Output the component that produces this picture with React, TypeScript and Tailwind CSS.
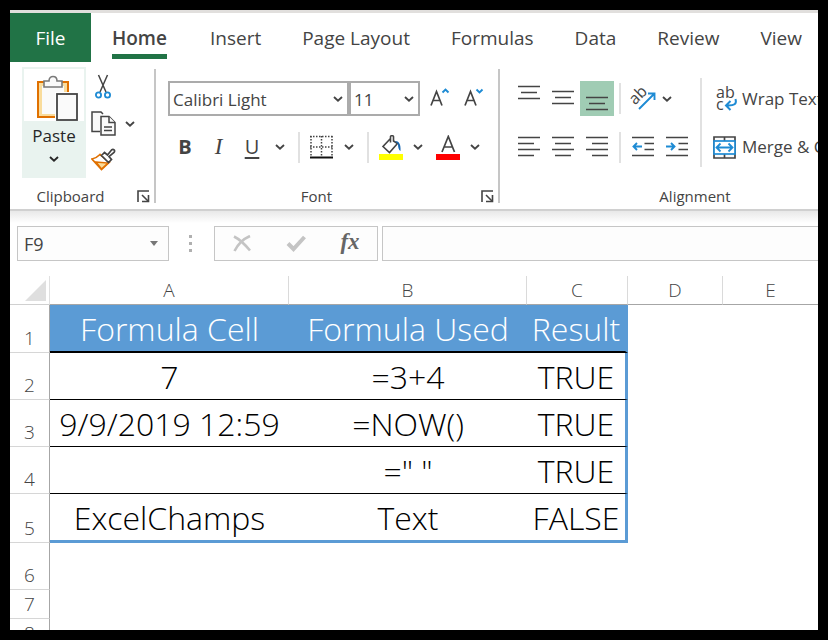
import { useState } from "react";
import type { ReactNode } from "react";

type Row = {
  n: number;
  cells: string[];
};

const TABS = ["Insert", "Page Layout", "Formulas", "Data", "Review", "View"];

const ROWS: Row[] = [
  { n: 2, cells: ["7", "=3+4", "TRUE"] },
  { n: 3, cells: ["9/9/2019 12:59", "=NOW()", "TRUE"] },
  { n: 4, cells: ["", '=" "', "TRUE"] },
];

type AlignKind = "top" | "middle" | "bottom";

function Chevron({ color = "#444444" }: { color?: string }) {
  return (
    <svg width="10" height="6" viewBox="0 0 10 6" fill="none" stroke={color} strokeWidth="1.9">
      <path d="M1 1l4 3.6L9 1" />
    </svg>
  );
}

function DropButton({ label, className = "" }: { label: string; className?: string }) {
  return (
    <button aria-label={label} className={`flex h-8 w-[14px] shrink-0 items-center justify-center ${className}`}>
      <Chevron />
    </button>
  );
}

function Launcher({ label }: { label: string }) {
  return (
    <button aria-label={label} className="shrink-0">
      <svg width="13" height="13" viewBox="0 0 13 13" fill="none" stroke="#444444" strokeWidth="1.6">
        <path d="M1 12V1h11" />
        <path d="M5 5l6 6" />
        <path d="M11.5 5v6.5H5" />
      </svg>
    </button>
  );
}

/** Small vertical rule between the tools of one group */
function Rule() {
  return <div className="h-[31px] w-[2px] shrink-0 bg-[#e1e1e1]" />;
}

function Tool({ label, className, children }: { label: string; className: string; children: ReactNode }) {
  return (
    <button aria-label={label} title={label} className={`flex shrink-0 items-center justify-center ${className}`}>
      {children}
    </button>
  );
}

function PasteIcon() {
  return (
    <svg width="42" height="46" viewBox="0 0 42 46" fill="none">
      <rect x="2" y="7" width="30" height="35" fill="#f9dc9c" stroke="#e07000" strokeWidth="2" />
      <rect x="6" y="11" width="22" height="28" fill="#fafafa" />
      <path d="M8 12V6h5c0-6 8-6 8 0h5v6z" fill="#fafafa" stroke="#7a7a7a" strokeWidth="1.6" />
      <rect x="19" y="17" width="23" height="29" fill="#ffffff" />
      <rect x="21" y="19" width="20" height="26" fill="#fafafa" stroke="#444444" strokeWidth="1.8" />
    </svg>
  );
}

function CutIcon() {
  return (
    <svg width="16" height="25" viewBox="0 0 16 25" fill="none">
      <path d="M3.5 1L11 18M12.5 1L5 18" stroke="#444444" strokeWidth="1.5" />
      <circle cx="3.5" cy="21" r="2.6" stroke="#1e8bd4" strokeWidth="1.8" />
      <circle cx="12.5" cy="21" r="2.6" stroke="#1e8bd4" strokeWidth="1.8" />
    </svg>
  );
}

function CopyIcon() {
  return (
    <svg width="25" height="25" viewBox="0 0 25 25" fill="#fafafa" stroke="#444444" strokeWidth="1.5">
      <path d="M9 20.5H1V1h9l2 2" />
      <path d="M10 5.5h8l6 6V24H10z" />
      <path d="M18 5.5v6h6M13 16h8M13 19.5h8" />
    </svg>
  );
}

function BrushIcon() {
  return (
    <svg width="25" height="23" viewBox="0 0 25 23" fill="none">
      <path d="M9 6.5C6.5 9 4 10.5 1 11L10.5 21.5 18.5 14z" fill="#ffffff" stroke="#e07000" strokeWidth="1.7" />
      <path d="M5 14l12 1-6.5 6z" fill="#f9dc9c" stroke="#e07000" strokeWidth="1.4" />
      <path
        d="M10.5 7.5l3-3 3 2.5 4-5c2-1.5 4 .5 2.5 2.5l-5 4 2.5 3-3 3z"
        fill="#ffffff"
        stroke="#444444"
        strokeWidth="1.7"
      />
    </svg>
  );
}

function BordersIcon() {
  return (
    <svg width="23" height="24" viewBox="0 0 23 24" fill="none">
      <path d="M0 1.5h23M0 12h23" stroke="#444444" strokeWidth="1.5" strokeDasharray="1.5 1.5" />
      <path d="M1 1v20M11.5 1v20M22 1v20" stroke="#444444" strokeWidth="1.5" strokeDasharray="1.5 1.5" />
      <path d="M0 22.5h23" stroke="#111111" strokeWidth="2" />
    </svg>
  );
}

function FillIcon() {
  return (
    <svg width="24" height="25" viewBox="0 0 24 25" fill="none">
      <path d="M11.5 3.5L4 11.5 10.5 17.5 18.5 8.5 14.5 6V1.5c0-1-3-1-3 0v6" stroke="#444444" strokeWidth="1.6" />
      <path d="M16 6c4 0 6 3 5.5 10-2-1-2.5-4-2.5-7z" fill="#1565b0" />
      <rect y="19" width="24" height="6" fill="#ffff00" />
    </svg>
  );
}

function FontColorIcon() {
  return (
    <svg width="24" height="25" viewBox="0 0 24 25" fill="none">
      <path d="M6 17L12.3 1.5 18.5 17M8 12h8.5" stroke="#444444" strokeWidth="1.7" />
      <rect y="19" width="24" height="6" fill="#ff0000" />
    </svg>
  );
}

function FontSizeIcon({ up }: { up: boolean }) {
  return (
    <svg width="20" height="21" viewBox="0 0 20 21" fill="none">
      <path d="M1 17.5L6.5 3.5 12 17.5M3 12.5h7" stroke="#444444" strokeWidth="1.7" />
      <path d={up ? "M12.5 4.5l3-3 3 3" : "M12.5 1.5l3 3 3-3"} stroke="#1e8bd4" strokeWidth="1.9" />
    </svg>
  );
}

function VAlignIcon({ kind }: { kind: AlignKind }) {
  const y = { top: 3.5, middle: 8.5, bottom: 14.5 }[kind];
  return (
    <svg width="22" height="31" viewBox="0 0 22 31" stroke="#444444" strokeWidth="1.5">
      <path d={`M0 ${y}h22M3 ${y + 6}h16M0 ${y + 12}h22`} />
    </svg>
  );
}

function HAlignIcon({ kind }: { kind: "left" | "center" | "right" }) {
  const x = { left: 0, center: 3, right: 6 }[kind];
  return (
    <svg width="22" height="22" viewBox="0 0 22 22" stroke="#444444" strokeWidth="1.5">
      <path d={`M0 1.5h22M${x} 7.5h16M0 13.5h22M${x} 19.5h16`} />
    </svg>
  );
}

function IndentIcon({ more }: { more: boolean }) {
  return (
    <svg width="22" height="22" viewBox="0 0 22 22" fill="none" strokeWidth="1.5">
      <path d="M0 1.5h22M12.5 7.5H22M12.5 13.5H22M0 19.5h22" stroke="#444444" />
      <path d={more ? "M0 10.5h8M5 7l3.5 3.5L5 14" : "M1 10.5h9M5 7l-3.5 3.5L5 14"} stroke="#1e8bd4" strokeWidth="1.9" />
    </svg>
  );
}

function OrientationIcon() {
  return (
    <svg width="26" height="26" viewBox="0 0 26 26" fill="none" className="overflow-visible">
      <text x="4" y="19" transform="rotate(-45 5 18)" fontSize="16" fill="#444444" className="font-['Open_Sans',sans-serif]">
        ab
      </text>
      <path d="M9 23L24 8M18 7.5h6.5V14" stroke="#1e8bd4" strokeWidth="1.9" />
    </svg>
  );
}

function WrapIcon() {
  return (
    <svg width="25" height="26" viewBox="0 0 25 26" fill="none" className="overflow-visible">
      <text fontSize="16" fill="#444444" className="font-['Open_Sans',sans-serif]">
        <tspan x="3" y="12">ab</tspan>
        <tspan x="3" y="24">c</tspan>
      </text>
      <path d="M22.5 13c1.5 5-1 7-9 6.5M17.5 15l-4.5 4.5 4.5 4.5" stroke="#1e8bd4" strokeWidth="2" />
    </svg>
  );
}

function MergeIcon() {
  return (
    <svg width="25" height="23" viewBox="0 0 25 23" fill="none">
      <path d="M1 1h21v21H1zM11.5 1v4M11.5 18v4" fill="#fafafa" stroke="#444444" strokeWidth="1.7" />
      <rect x="1" y="5" width="21" height="13" fill="#ffffff" stroke="#1e8bd4" strokeWidth="1.7" />
      <path d="M4 11.5h15M7.5 7.5l-4 4 4 4M15.5 7.5l4 4-4 4" stroke="#1e8bd4" strokeWidth="1.8" />
    </svg>
  );
}

function Picker({ label, options, className }: { label: string; options: string[]; className: string }) {
  return (
    <div className={`relative h-[35px] ${className}`}>
      <select
        aria-label={label}
        className="h-full w-full appearance-none border-2 border-[#ababab] bg-white pt-[2px] pl-[3px] text-[17px] text-[#444444]"
      >
        {options.map(o => (
          <option key={o}>{o}</option>
        ))}
      </select>
      <span className="pointer-events-none absolute inset-y-0 right-[6px] flex items-center">
        <Chevron />
      </span>
    </div>
  );
}

function RowHead({ n }: { n: number }) {
  return (
    <th
      scope="row"
      className="border-r border-b border-r-[#a6a6a6] border-b-[#d6d6d6] p-0 align-bottom text-[19px] leading-7 font-light text-[#444444]"
    >
      {n}
    </th>
  );
}

export default function App() {
  const [cellRef, setCellRef] = useState("F9");
  const [formula, setFormula] = useState("");

  return (
    <div className="h-screen bg-black p-[10px] font-['Open_Sans','Noto_Sans',sans-serif] text-[#444444]">
      <div className="flex h-full flex-col overflow-hidden bg-white">
        {/* Tabs */}
        <nav className="flex h-[52px] shrink-0 items-stretch border-t-[3px] border-[#e1dfdd] text-[19px] whitespace-nowrap">
          <button className="w-[81px] shrink-0 bg-[#217346] pt-[2px] text-white">File</button>
          <button className="ml-[21px] flex shrink-0 flex-col items-center font-semibold">
            <span className="pt-[10px] leading-[31px]">Home</span>
            <span className="h-[5px] w-full bg-[#217346]" />
          </button>
          <div className="flex items-center gap-[41px] pt-[2px] pl-[43px]">
            {TABS.map(t => (
              <button key={t}>{t}</button>
            ))}
          </div>
        </nav>

        {/* Ribbon */}
        <div className="flex h-[149px] shrink-0 items-start border-b-2 border-[#d0d0d0] pt-[5px]">
          <section aria-label="Clipboard" className="flex h-[137px] w-[144px] shrink-0 flex-col justify-between pl-3">
            <div className="flex">
              <button className="flex h-[111px] w-16 flex-col items-center bg-[#e9f3ef] p-[2px] text-[17px] text-[#262626]">
                <span className="flex h-[52px] w-full items-end justify-end bg-white pr-[6px]">
                  <PasteIcon />
                </span>
                <span className="leading-[30px]">Paste</span>
                <span className="pt-[5px]"><Chevron color="#262626" /></span>
              </button>
              <div className="flex flex-col gap-3 pt-[7px] pl-[5px]">
                <Tool label="Cut" className="w-6"><CutIcon /></Tool>
                <div className="flex h-[25px] items-center gap-[7px]">
                  <Tool label="Copy" className=""><CopyIcon /></Tool>
                  <DropButton label="Copy options" />
                </div>
                <Tool label="Format Painter" className="w-[25px]"><BrushIcon /></Tool>
              </div>
            </div>
            <div className="flex h-4 items-center pr-1">
              <span className="flex-1 pr-[18px] text-center text-[15px] leading-4">Clipboard</span>
              <Launcher label="Clipboard settings" />
            </div>
          </section>

          <div className="mt-[2px] h-[134px] w-[2px] shrink-0 bg-[#c6c6c6]" />

          <section aria-label="Font" className="flex h-[137px] w-[342px] shrink-0 flex-col pt-[14px]">
            <div className="flex items-center pl-3">
              <Picker label="Font" options={["Calibri Light", "Calibri", "Arial"]} className="w-[181px]" />
              <Picker label="Font size" options={["11", "12", "14"]} className="w-[71px]" />
              <Tool label="Increase Font Size" className="ml-[10px]"><FontSizeIcon up /></Tool>
              <Tool label="Decrease Font Size" className="ml-[14px]"><FontSizeIcon up={false} /></Tool>
            </div>
            <div className="mt-[15px] flex h-8 items-center pl-3">
              <Tool label="Bold" className="w-[34px] text-[20px] font-bold">B</Tool>
              <Tool label="Italic" className="w-[33px] font-['Liberation_Serif',serif] text-[23px] italic">I</Tool>
              <Tool label="Underline" className="w-[34px] text-[20px] underline underline-offset-[3px]">U</Tool>
              <DropButton label="Underline options" className="mx-1" />
              <div className="ml-[7px]"><Rule /></div>
              <Tool label="Borders" className="ml-[10px]"><BordersIcon /></Tool>
              <DropButton label="Border options" className="ml-[9px]" />
              <div className="ml-[11px]"><Rule /></div>
              <Tool label="Fill Color" className="ml-[10px]"><FillIcon /></Tool>
              <DropButton label="Fill options" className="mx-2" />
              <Tool label="Font Color" className="ml-[3px]"><FontColorIcon /></Tool>
              <DropButton label="Font color options" className="mx-2" />
            </div>
            <div className="mt-auto flex h-4 items-center pr-1">
              <span className="flex-1 pr-1 text-center text-[15px] leading-4">Font</span>
              <Launcher label="Font settings" />
            </div>
          </section>

          <div className="mt-[2px] h-[134px] w-[2px] shrink-0 bg-[#c6c6c6]" />

          <section aria-label="Alignment" className="flex h-[137px] shrink-0 flex-col pl-3">
            <div className="flex">
              <div className="flex flex-col gap-[15px] pt-[14px]">
                <div className="flex h-[35px] items-center">
                  <Tool label="Top Align" className="h-full w-[34px]"><VAlignIcon kind="top" /></Tool>
                  <Tool label="Middle Align" className="h-full w-[34px]"><VAlignIcon kind="middle" /></Tool>
                  <Tool label="Bottom Align" className="h-full w-[34px] bg-[#a0ccb4]"><VAlignIcon kind="bottom" /></Tool>
                  <div className="ml-[5px]"><Rule /></div>
                  <Tool label="Orientation" className="ml-[9px]"><OrientationIcon /></Tool>
                  <DropButton label="Orientation options" className="ml-1" />
                </div>
                <div className="flex h-8 items-center">
                  <Tool label="Align Left" className="w-[34px]"><HAlignIcon kind="left" /></Tool>
                  <Tool label="Center" className="w-[34px]"><HAlignIcon kind="center" /></Tool>
                  <Tool label="Align Right" className="w-[34px]"><HAlignIcon kind="right" /></Tool>
                  <div className="ml-[5px]"><Rule /></div>
                  <Tool label="Decrease Indent" className="ml-[5px] w-[34px]"><IndentIcon more={false} /></Tool>
                  <Tool label="Increase Indent" className="w-[34px]"><IndentIcon more /></Tool>
                </div>
              </div>
              <div className="mt-[11px] ml-[6px] h-[89px] w-[2px] bg-[#e1e1e1]" />
              <div className="flex flex-col gap-[15px] pt-[14px] pl-[11px] text-[17px] whitespace-nowrap">
                <button className="flex h-[35px] items-center gap-1"><WrapIcon />Wrap Text</button>
                <button className="flex h-8 items-center gap-1"><MergeIcon />Merge &amp; Center</button>
              </div>
            </div>
            <div className="mt-auto flex h-4 items-center">
              <span className="w-[366px] text-center text-[15px] leading-4">Alignment</span>
            </div>
          </section>
        </div>

        {/* Formula bar */}
        <div className="flex h-[65px] shrink-0 items-start bg-linear-to-b from-[#e8e8e8] to-white to-[12px] pt-[15px] pl-[7px]">
          <div className="relative h-[35px] w-[152px] shrink-0">
            <input
              aria-label="Name Box"
              value={cellRef}
              onChange={e => setCellRef(e.target.value)}
              className="h-full w-full border border-[#c6c6c6] bg-[#fdfdfd] pl-[6px] text-[18px]"
            />
            <svg className="pointer-events-none absolute top-[15px] right-[11px]" width="8" height="5" viewBox="0 0 8 5">
              <path d="M0 0h8L4 5z" fill="#777777" />
            </svg>
          </div>
          <div className="flex h-[35px] w-[45px] shrink-0 flex-col items-center justify-center gap-[4px] pr-[2px]">
            <span className="size-[3px] bg-[#b0b0b0]" />
            <span className="size-[3px] bg-[#b0b0b0]" />
            <span className="size-[3px] bg-[#b0b0b0]" />
          </div>
          <div className="flex h-[35px] w-[164px] shrink-0 items-center border border-[#c6c6c6] bg-[#fdfdfd]">
            <Tool label="Cancel" className="w-[54px]">
              <svg width="18" height="17" viewBox="0 0 18 17" fill="none" stroke="#c4c4c4" strokeWidth="2.6">
                <path d="M1 1.5c6 3 11 8 16 14M17 1C10 4 5 9 1.5 16" />
              </svg>
            </Tool>
            <Tool label="Enter" className="w-[54px]">
              <svg width="20" height="17" viewBox="0 0 20 17" fill="none" stroke="#c4c4c4" strokeWidth="4">
                <path d="M2 8.5l5.500 5.500L18.5 2" />
              </svg>
            </Tool>
            <Tool label="Insert Function" className="w-[54px] pb-1 font-['Liberation_Serif',serif] text-[23px] leading-none font-bold text-[#666666] italic">
              fx
            </Tool>
          </div>
          <input
            aria-label="Formula Bar"
            value={formula}
            onChange={e => setFormula(e.target.value)}
            className="ml-1 h-[35px] min-w-0 flex-1 border border-r-0 border-[#c6c6c6] bg-[#fdfdfd] px-2 text-[18px]"
          />
        </div>

        {/* Sheet */}
        <table className="w-full table-fixed border-separate border-spacing-0 text-center">
          <colgroup>
            <col className="w-10" />
            <col className="w-[239px]" />
            <col className="w-[238px]" />
            <col className="w-[101px]" />
            <col className="w-[95px]" />
            <col />
          </colgroup>
          <thead>
            <tr className="h-[29px] text-[19px] leading-7 text-[#444444]">
              <td className="border-r border-b border-r-[#e0e0e0] border-b-[#d0d0d0] p-0">
                <svg className="mr-[3px] ml-auto" width="21" height="21" viewBox="0 0 21 21">
                  <path d="M21 0v21H0z" fill="#dfdfdf" />
                </svg>
              </td>
              <th scope="col" className="border-r border-b border-r-[#dadada] border-b-[#a6a6a6] p-0 font-light">A</th>
              <th scope="col" className="border-r border-b border-r-[#dadada] border-b-[#a6a6a6] p-0 font-light">B</th>
              <th scope="col" className="border-r border-b border-r-[#dadada] border-b-[#a6a6a6] p-0 font-light">C</th>
              <th scope="col" className="border-r border-b border-r-[#dadada] border-b-[#a6a6a6] p-0 font-light">D</th>
              <th scope="col" className="border-b border-[#a6a6a6] p-0 font-light">E</th>
            </tr>
          </thead>
          <tbody className="text-[32px] leading-[44px] font-light whitespace-nowrap text-black">
            <tr className="h-12 text-white">
              <RowHead n={1} />
              <td className="border-b-2 border-black bg-[#5b9bd5] p-0 pt-[2px]">Formula Cell</td>
              <td className="border-b-2 border-black bg-[#5b9bd5] p-0 pt-[2px]">Formula Used</td>
              <td className="border-r-[3px] border-b-2 border-r-[#5b9bd5] border-b-black bg-[#5b9bd5] p-0 pt-[2px]">Result</td>
              <td className="p-0" />
              <td className="p-0" />
            </tr>
            {ROWS.map(r => (
              <tr key={r.n} className="h-[47px]">
                <RowHead n={r.n} />
                <td className="border-b border-black p-0 pt-[2px]">{r.cells[0]}</td>
                <td className="border-b border-black p-0 pt-[2px]">{r.cells[1]}</td>
                <td className="border-r-[3px] border-b border-r-[#5b9bd5] border-b-black p-0 pt-[2px]">{r.cells[2]}</td>
                <td className="p-0" />
                <td className="p-0" />
              </tr>
            ))}
            <tr className="h-[49px]">
              <RowHead n={5} />
              <td className="border-b-[3px] border-[#5b9bd5] p-0 pt-[2px]">ExcelChamps</td>
              <td className="border-b-[3px] border-[#5b9bd5] p-0 pt-[2px]">Text</td>
              <td className="border-r-[3px] border-b-[3px] border-[#5b9bd5] p-0 pt-[2px]">FALSE</td>
              <td className="p-0" />
              <td className="p-0" />
            </tr>
            <tr className="h-[47px]">
              <RowHead n={6} />
              <td colSpan={5} className="p-0" />
            </tr>
            <tr className="h-[29px]">
              <RowHead n={7} />
              <td colSpan={5} className="p-0" />
            </tr>
            <tr className="h-[29px]">
              <RowHead n={8} />
              <td colSpan={5} className="p-0" />
            </tr>
          </tbody>
        </table>
      </div>
    </div>
  );
}
